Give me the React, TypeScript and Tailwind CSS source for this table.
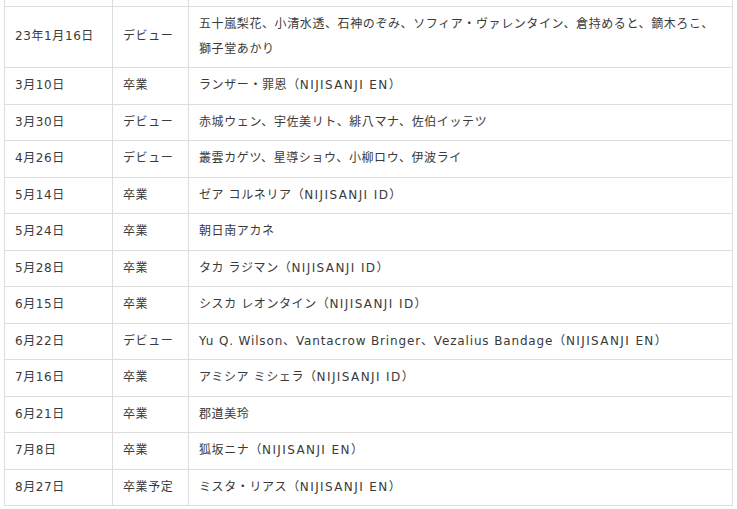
import React from "react";

type Row = {
  date: string;
  kind: string;
  names: string;
  branch?: string;
  latin?: boolean;
};

const rows: Row[] = [
  {
    date: "23年1月16日",
    kind: "デビュー",
    names:
      "五十嵐梨花、小清水透、石神のぞみ、ソフィア・ヴァレンタイン、倉持めると、鏑木ろこ、獅子堂あかり",
  },
  { date: "3月10日", kind: "卒業", names: "ランザー・罪恩", branch: "NIJISANJI EN" },
  { date: "3月30日", kind: "デビュー", names: "赤城ウェン、宇佐美リト、緋八マナ、佐伯イッテツ" },
  { date: "4月26日", kind: "デビュー", names: "叢雲カゲツ、星導ショウ、小柳ロウ、伊波ライ" },
  { date: "5月14日", kind: "卒業", names: "ゼア コルネリア", branch: "NIJISANJI ID" },
  { date: "5月24日", kind: "卒業", names: "朝日南アカネ" },
  { date: "5月28日", kind: "卒業", names: "タカ ラジマン", branch: "NIJISANJI ID" },
  { date: "6月15日", kind: "卒業", names: "シスカ レオンタイン", branch: "NIJISANJI ID" },
  {
    date: "6月22日",
    kind: "デビュー",
    names: "Yu Q. Wilson、Vantacrow Bringer、Vezalius Bandage",
    branch: "NIJISANJI EN",
    latin: true,
  },
  { date: "7月16日", kind: "卒業", names: "アミシア ミシェラ", branch: "NIJISANJI ID" },
  { date: "6月21日", kind: "卒業", names: "郡道美玲" },
  { date: "7月8日", kind: "卒業", names: "狐坂ニナ", branch: "NIJISANJI EN" },
  { date: "8月27日", kind: "卒業予定", names: "ミスタ・リアス", branch: "NIJISANJI EN" },
];

const cell = "border border-[#dddddd] px-[10px] py-[5.25px] align-middle";

export default function App() {
  return (
    <div className="min-h-screen bg-white pl-[4px] font-['DejaVu_Sans','Noto_Sans_CJK_JP',sans-serif] text-[12px] leading-[25px] tracking-[0.6px] text-[#3a3a3a]">
      <table className="w-[729px] table-fixed border-collapse">
        <colgroup>
          <col className="w-[108px]" />
          <col className="w-[76px]" />
          <col />
        </colgroup>
        <tbody>
          {/* tail of the previous row, cut off by the top of the view */}
          <tr className="h-[6px]">
            <td className="border-x border-[#dddddd]"></td>
            <td className="border-x border-[#dddddd]"></td>
            <td className="border-x border-[#dddddd]"></td>
          </tr>
          {rows.map((row, i) => (
            <tr key={i}>
              <td className={cell}>{row.date}</td>
              <td className={cell}>{row.kind}</td>
              <td className={cell}>
                <span className={row.latin ? "tracking-[0.85px]" : ""}>{row.names}</span>
                {row.branch && (
                  <>
                    （<span className="tracking-[1.4px]">{row.branch}</span>）
                  </>
                )}
              </td>
            </tr>
          ))}
        </tbody>
      </table>
    </div>
  );
}
